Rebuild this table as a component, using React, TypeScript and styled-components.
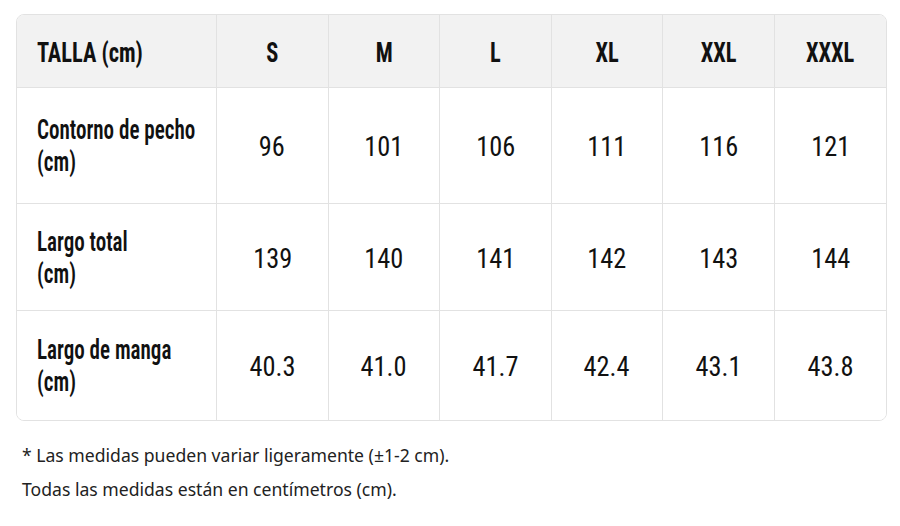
import React from "react"
import styled, { createGlobalStyle } from "styled-components"

const GlobalStyle = createGlobalStyle`
  html, body {
    margin: 0;
    padding: 0;
    background: #ffffff;
  }
`

const Page = styled.div`
  padding: 14px 14px 0 16px;
  width: 900px;
  box-sizing: border-box;
`

const Table = styled.div`
  display: grid;
  grid-template-columns: 200px repeat(6, 1fr);
  grid-template-rows: 73px 116px 107px 109px;
  width: 871px;
  border: 1px solid #e2e2e2;
  border-radius: 8px;
  overflow: hidden;
  box-sizing: border-box;
  font-family: "Roboto", "Liberation Sans", sans-serif;
  font-stretch: 75%;
  color: #111111;
`

const Cell = styled.div<{ $head?: boolean; $label?: boolean; $lastCol?: boolean; $lastRow?: boolean }>`
  display: flex;
  align-items: center;
  justify-content: ${(p) => (p.$label ? "flex-start" : "center")};
  padding: ${(p) => (p.$label ? "0 20px" : "0")};
  background: ${(p) => (p.$head ? "#f2f2f2" : "#ffffff")};
  border-right: ${(p) => (p.$lastCol ? "none" : "1px solid #e2e2e2")};
  border-bottom: ${(p) => (p.$lastRow ? "none" : "1px solid #e2e2e2")};
  white-space: nowrap;
`

const HeadText = styled.span<{ $left?: boolean }>`
  display: inline-block;
  font-weight: 700;
  font-size: 27px;
  line-height: 1;
  margin-top: 5px;
  transform: scaleX(0.83);
  transform-origin: ${(p) => (p.$left ? "left center" : "center")};
`

const LabelText = styled.span`
  display: inline-block;
  font-weight: 650;
  font-size: 27px;
  line-height: 32px;
  margin-top: 1px;
  transform: scaleX(0.78);
  transform-origin: left center;
`

const ValueText = styled.span`
  display: inline-block;
  font-weight: 400;
  font-size: 28px;
  line-height: 1;
  margin-top: 3px;
  transform: scaleX(0.94);
`

const Notes = styled.div`
  padding: 17px 0 0 6px;
  font-family: "Noto Sans", "Open Sans", sans-serif;
  font-size: 17.6px;
  color: #222222;
`

const Note = styled.p`
  margin: 0;
  line-height: 34px;
`

const sizes = ["S", "M", "L", "XL", "XXL", "XXXL"]

const rows: { label: [string, string]; values: string[] }[] = [
  { label: ["Contorno de pecho", "(cm)"], values: ["96", "101", "106", "111", "116", "121"] },
  { label: ["Largo total", "(cm)"], values: ["139", "140", "141", "142", "143", "144"] },
  { label: ["Largo de manga", "(cm)"], values: ["40.3", "41.0", "41.7", "42.4", "43.1", "43.8"] },
]

export default function App() {
  return (
    <Page>
      <GlobalStyle />
      <Table>
        <Cell $head $label>
          <HeadText $left>TALLA (cm)</HeadText>
        </Cell>
        {sizes.map((s, i) => (
          <Cell key={s} $head $lastCol={i === sizes.length - 1}>
            <HeadText>{s}</HeadText>
          </Cell>
        ))}
        {rows.map((row, r) => {
          const lastRow = r === rows.length - 1
          return (
            <React.Fragment key={row.label[0]}>
              <Cell $label $lastRow={lastRow}>
                <LabelText>
                  {row.label[0]}
                  <br />
                  {row.label[1]}
                </LabelText>
              </Cell>
              {row.values.map((v, i) => (
                <Cell key={i} $lastRow={lastRow} $lastCol={i === row.values.length - 1}>
                  <ValueText>{v}</ValueText>
                </Cell>
              ))}
            </React.Fragment>
          )
        })}
      </Table>
      <Notes>
        <Note>* Las medidas pueden variar ligeramente (±1-2 cm).</Note>
        <Note>Todas las medidas están en centímetros (cm).</Note>
      </Notes>
    </Page>
  )
}
